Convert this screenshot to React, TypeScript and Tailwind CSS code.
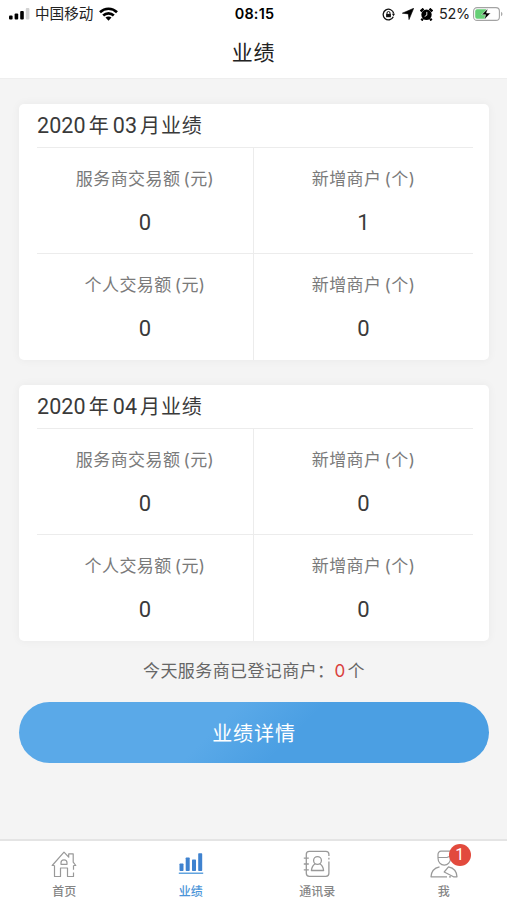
import React from "react";

const FONT = "font-['Inter','Noto_Sans_CJK_SC',sans-serif]";

type Cell = { name: string; unit: string; value: number };
type Month = { year: string; month: string; cells: Cell[] };

const months: Month[] = [
  {
    year: "2020",
    month: "03",
    cells: [
      { name: "服务商交易额", unit: "元", value: 0 },
      { name: "新增商户", unit: "个", value: 1 },
      { name: "个人交易额", unit: "元", value: 0 },
      { name: "新增商户", unit: "个", value: 0 },
    ],
  },
  {
    year: "2020",
    month: "04",
    cells: [
      { name: "服务商交易额", unit: "元", value: 0 },
      { name: "新增商户", unit: "个", value: 0 },
      { name: "个人交易额", unit: "元", value: 0 },
      { name: "新增商户", unit: "个", value: 0 },
    ],
  },
];

function StatusBar() {
  return (
    <div className="grid h-7 grid-cols-3 items-center pl-[9px] pr-[7px] text-black">
      <div className="flex items-center">
        <svg width="21" height="12" viewBox="0 0 21 12">
          <rect x="0" y="7.5" width="3.6" height="4" rx="1" />
          <rect x="5.6" y="5.5" width="3.6" height="6" rx="1" />
          <rect x="11.2" y="3" width="3.6" height="8.5" rx="1" />
          <rect x="16.8" y="0" width="3.6" height="11.5" rx="1" fill="#d2d2d2" />
        </svg>
        <span className="ml-[5px] text-[14.6px] leading-none text-[#222]">中国移动</span>
        <svg className="ml-[6px]" width="19" height="14" viewBox="0 0 19 14" fill="none" stroke="#000" strokeWidth="2.6">
          <path d="M1 5.2C5.8.5 13.200.5 18 5.2" />
          <path d="M4.200 8.500c3-2.900 7.600-2.900 10.600 0" />
          <path d="M6.500 10.600c1.600-1.600 4.400-1.600 6 0L9.500 13.800z" fill="#000" stroke="none" />
        </svg>
      </div>
      <div className="text-center text-[14.4px] font-semibold leading-none tracking-[0.2px]">08:15</div>
      <div className="-mr-[3px] flex items-center justify-end">
        <svg width="13" height="13" viewBox="0 0 13 13" fill="none" stroke="#111">
          <path d="M11.300 8.800A5.300 5.300 0 1 1 11.700 5.500" strokeWidth="1.300" />
          <path d="M9.900 5.700h3.100l-1.500 2.500z" fill="#111" stroke="none" />
          <rect x="4.100" y="5.900" width="4.800" height="3.300" fill="#111" stroke="none" />
          <path d="M5 6V5a1.500 1.500 0 0 1 3 0v1" />
        </svg>
        <svg className="ml-[7px]" width="12" height="12" viewBox="0 0 12 12">
          <path d="M11.700.3 7 11.600 6.300 5.900.3 5.200z" stroke="#000" strokeWidth=".6" strokeLinejoin="round" />
        </svg>
        <svg className="ml-[6px]" width="13" height="13" viewBox="0 0 13 13">
          <circle cx="6.500" cy="6.800" r="5.200" />
          <path d="M.6 3.300 3.500.7M12.400 3.300 9.500.7M2.800 10.600 1.500 12.500M10.200 10.600l1.300 1.900" stroke="#000" strokeWidth="2.400" />
          <path d="M6.800 3.900v3.300L4.700 8.500" fill="none" stroke="#fff" strokeWidth=".9" />
        </svg>
        <span className="ml-[6px] text-[14.4px] leading-none tracking-[-0.2px] text-[#222]">52%</span>
        <svg className="ml-[3px]" width="30" height="14" viewBox="0 0 30 14">
          <rect x=".6" y=".6" width="25.800" height="12.800" rx="3.500" fill="#fff" stroke="#a3a3a3" strokeWidth="1.100" />
          <path d="M4 2.200h9v9.600H4A2 2 0 0 1 2.200 9.800V4.200A2 2 0 0 1 4 2.200z" fill="#65cf75" />
          <path d="M28 4.800c2 .8 2 3.600 0 4.400z" fill="#aaa" />
          <path d="M14.800 1.400 8.700 7.700h3.900L11.400 12.600l6.200-6.500h-4.100z" stroke="#fff" strokeWidth=".5" />
        </svg>
      </div>
    </div>
  );
}

function StatCell({ cell, right, bottom }: { cell: Cell; right: boolean; bottom: boolean }) {
  return (
    <div
      className={`flex h-[106px] flex-col items-center border-[#ececec] pt-[19px] text-center ${right ? "" : "border-r"} ${
        bottom ? "" : "border-b"
      }`}
    >
      <div className="flex h-6 items-center whitespace-nowrap text-[17px] leading-6 tracking-[0.45px] text-[#7a7a7a]">
        <span>{cell.name}</span>
        <span className="ml-[3px]">({cell.unit})</span>
      </div>
      <div className="mt-[18px] h-7 font-['Roboto',sans-serif] text-[22px] leading-7 text-[#3a3a3a]">{cell.value}</div>
    </div>
  );
}

function MonthCard({ data }: { data: Month }) {
  return (
    <section className="h-[256px] rounded-[5px] bg-white pl-[18px] pr-4 shadow-[0_0_10px_rgba(0,0,0,0.05)]">
      <h2 className="flex h-11 items-center gap-[3px] border-b border-[#ececec] text-[20px] leading-none text-[#3a3a3a]">
        <span className="font-['Roboto',sans-serif] text-[21.5px] tracking-[0.1px]">{data.year}</span>
        <span>年</span>
        <span className="ml-px font-['Roboto',sans-serif] text-[21.5px] tracking-[0.1px]">{data.month}</span>
        <span className="tracking-[0.8px]">月业绩</span>
      </h2>
      <div className="grid grid-cols-[217px_1fr]">
        {data.cells.map((cell, i) => (
          <StatCell key={i} cell={cell} right={i % 2 === 1} bottom={i > 1} />
        ))}
      </div>
    </section>
  );
}

function HomeIcon() {
  return (
    <svg width="26" height="28" viewBox="0 0 26 28" fill="none" stroke="#999" strokeWidth="1.200" strokeLinejoin="round">
      <path d="M3.500 15.500H1.200L13 2.200l4.700 5V3.800h4.500v8.400l2.600 3.300h-2.300" />
      <path d="M3.500 15.500v11h6V18h7v8.500h6v-4M22.500 19.800v-4.300" />
      <path d="M10 14.300v-1.500a3 3 0 0 1 6 0v1.500z" />
    </svg>
  );
}

function ChartIcon() {
  return (
    <svg width="26" height="28" viewBox="0 0 26 28">
      <g fill="#3f82cf">
        <rect x="1.500" y="13.500" width="4" height="7.500" rx=".7" />
        <rect x="7.700" y="7.500" width="4" height="13.500" rx=".7" />
        <rect x="14" y="9.500" width="4" height="11.500" rx=".7" />
        <rect x="20.200" y="3.200" width="4" height="17.800" rx=".7" />
      </g>
      <rect x=".8" y="22.500" width="24.400" height="1.500" fill="#62a4df" />
    </svg>
  );
}

function ContactsIcon() {
  return (
    <svg width="28" height="28" viewBox="0 0 28 28" fill="none" stroke="#999" strokeWidth="1.300">
      <path d="M25.900 6V4.300A3 3 0 0 0 22.900 1.300H6.300A3 3 0 0 0 3.300 4.300v19a3 3 0 0 0 3 3h16.600a3 3 0 0 0 3-3V11.500M25.900 7.700v1.800" />
      <path d="M.8 8.200h5M.8 14h5M.8 19.800h5" />
      <circle cx="14.500" cy="10.500" r="3.900" />
      <path d="M12.300 13.800C10.200 15 8.800 16.900 8.400 20.500h12.200c-.4-3.600-1.800-5.500-3.900-6.700" strokeLinejoin="round" />
    </svg>
  );
}

function PersonIcon() {
  return (
    <svg width="28" height="28" viewBox="0 0 28 28" fill="none" stroke="#999" strokeWidth="1.200" strokeLinejoin="round">
      <path d="M8 8V4.500C8 2.600 9.300 1.200 11 1.200h9.500v7c0 4-2.600 7-6.200 7S8 12.200 8 8z" />
      <path d="M8 7.500h9l3.500-1.500" />
      <path d="M9.500 16.800C4 18 1.200 21 1 26.800h16M19 26.800h2M23.500 26.800h3.500c-.2-5.800-3-8.800-8.500-10L14.200 22z" />
    </svg>
  );
}

function TabItem({ label, active, badge, children }: { label: string; active?: boolean; badge?: number; children: React.ReactNode }) {
  return (
    <div className="flex flex-col items-center pt-[9px]">
      <div className="relative h-7">
        {children}
        {badge !== undefined && (
          <span className="absolute -top-[6px] left-[19px] flex h-[22px] w-[22px] items-center justify-center rounded-full bg-[#e24a3d] font-['Roboto',sans-serif] text-[16px] leading-none text-white">
            {badge}
          </span>
        )}
      </div>
      <span className={`mt-[7px] text-[12px] font-medium leading-[14px] ${active ? "text-[#4a94d8]" : "text-[#858585]"}`}>{label}</span>
    </div>
  );
}

export default function App() {
  return (
    <div className={`flex h-[900px] w-full flex-col overflow-hidden bg-[#f4f4f4] ${FONT}`}>
      <header className="h-[79px] shrink-0 border-b border-[#eeeeee] bg-white">
        <StatusBar />
        <h1 className="flex h-[49px] items-center justify-center text-[21px] tracking-[0.8px] text-[#222]">业绩</h1>
      </header>
      <main className="flex flex-1 flex-col pl-[19px] pr-[18px] pt-[25px]">
        <div className="flex flex-col gap-[25px]">
          {months.map((m) => (
            <MonthCard key={m.month} data={m} />
          ))}
        </div>
        <p className="mt-[18px] flex h-6 items-center justify-center whitespace-nowrap text-[17px] leading-6 tracking-[0.4px] text-[#666]">
          <span>今天服务商已登记商户：</span>
          <span className="text-[#d9403c]">0</span>
          <span className="ml-[2px]">个</span>
        </p>
        <button className="mt-[19px] h-[61px] rounded-full bg-[linear-gradient(135deg,#5aa9e8_42%,#4b9fe3_58%)] pt-[2px] text-[20px] tracking-[0.9px] text-white">
          业绩详情
        </button>
      </main>
      <nav className="grid h-[61px] shrink-0 grid-cols-4 border-t-2 border-[#e4e4e4] bg-white pl-px">
        <TabItem label="首页"><HomeIcon /></TabItem>
        <TabItem label="业绩" active><ChartIcon /></TabItem>
        <TabItem label="通讯录"><ContactsIcon /></TabItem>
        <TabItem label="我" badge={1}><PersonIcon /></TabItem>
      </nav>
    </div>
  );
}
